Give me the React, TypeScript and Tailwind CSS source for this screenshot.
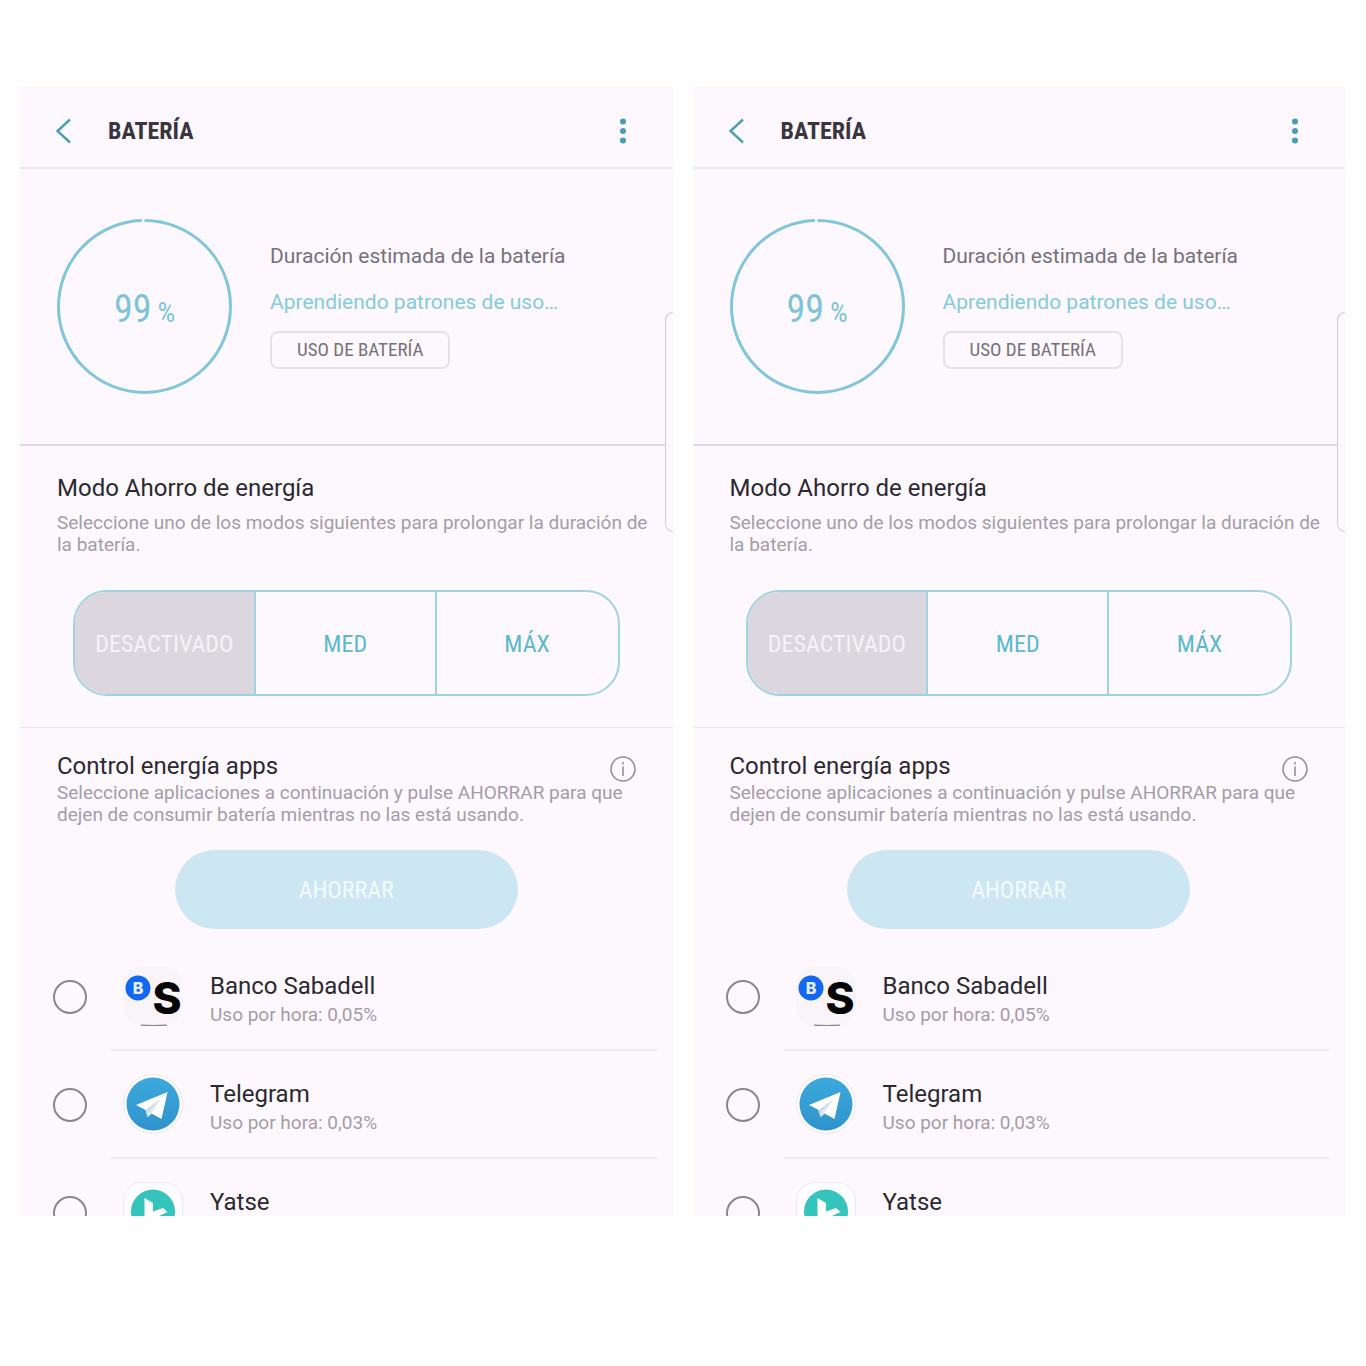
import { useState } from 'react'

interface PowerApp {
  id: string
  name: string
  usage?: string
  icon: () => React.ReactElement
}

const SabadellIcon = () => (
  <svg viewBox="0 0 60 60" className="size-15 shrink-0" aria-hidden="true">
    <rect x="0" y="0" width="60" height="60" rx="20" fill="#f8f4f8" />
    <path d="M18 59.200Q30 60 44 59.200" fill="none" stroke="#8d888e" strokeWidth="1.200" />
    <circle cx="15" cy="22" r="12.500" fill="#1268f0" />
    <text x="15" y="28" textAnchor="middle" fontSize="16" fontWeight="800" fill="#e4f0ff" className="font-['Inter',sans-serif]">
      B
    </text>
    <text x="44" y="48" textAnchor="middle" fontSize="44" fontWeight="800" fill="#050505" className="font-['Inter',sans-serif]">
      S
    </text>
  </svg>
)

const TelegramIcon = () => (
  <svg viewBox="0 0 60 60" className="size-15 shrink-0" aria-hidden="true">
    <defs>
      <linearGradient id="telegram-blue" x1="0" y1="0" x2="0" y2="1">
        <stop offset="0" stopColor="#3da9dc" />
        <stop offset="1" stopColor="#2e93cd" />
      </linearGradient>
    </defs>
    <circle cx="30" cy="30" r="29.500" fill="#fdfcfe" stroke="#ece9ee" />
    <circle cx="30" cy="30" r="26.500" fill="url(#telegram-blue)" />
    <path d="M13 31 44.500 18 38.500 45 28.500 39.500 24.500 43 22.500 36Z" fill="#fff" />
    <path d="M22.500 36 38 24.500 27 37 24.500 43Z" fill="#d3dbe8" />
    <path d="M27 37 38 24.500 28.500 39.500 24.500 43Z" fill="#e6ebf3" />
  </svg>
)

const YatseIcon = () => (
  <svg viewBox="0 0 60 60" className="size-15 shrink-0" aria-hidden="true">
    <rect x="0.500" y="0.500" width="59" height="59" rx="18" fill="#fdfcfe" stroke="#ece9ee" />
    <circle cx="30" cy="29.500" r="22" fill="#35c4bc" />
    <path d="M21.500 16 30 21V29.500L40 26 44.500 30 36 34 41 44H31L21.500 38Z" fill="#fff" />
  </svg>
)

const APPS: PowerApp[] = [
  { id: 'sabadell', name: 'Banco Sabadell', usage: '0,05%', icon: SabadellIcon },
  { id: 'telegram', name: 'Telegram', usage: '0,03%', icon: TelegramIcon },
  { id: 'yatse', name: 'Yatse', icon: YatseIcon },
]

const MODES = ['DESACTIVADO', 'MED', 'MÁX']

const BatteryScreen = () => {
  const [mode, setMode] = useState('DESACTIVADO')
  const [selected, setSelected] = useState<string[]>([])

  const toggleApp = (id: string) => {
    setSelected(
      selected.includes(id) ? selected.filter((s) => s !== id) : [...selected, id]
    )
  }

  return (
    <section className="relative min-w-0 flex-1 overflow-hidden bg-[#fcf8fe]">
      <header className="flex h-[83px] items-center border-b-2 border-[#ece5ef] px-8 pt-2">
        <button type="button" aria-label="Atrás" className="mr-8 flex w-6 justify-center">
          <svg viewBox="0 0 16 26" className="h-[26px] w-4" fill="none" stroke="#4a9fb4" strokeWidth="2.400">
            <path d="M14 1.500 1.500 13 14 24.500" />
          </svg>
        </button>
        <h1 className="flex-1 font-['Roboto_Condensed','Roboto',sans-serif] text-2xl font-bold text-[#3a353d]">
          BATERÍA
        </h1>
        <button type="button" aria-label="Más opciones" className="flex w-9 justify-center">
          <svg viewBox="0 0 8 28" className="h-7 w-2" fill="#4b9ab5">
            <circle cx="4" cy="4.500" r="3" />
            <circle cx="4" cy="14" r="3" />
            <circle cx="4" cy="23.500" r="3" />
          </svg>
        </button>
      </header>

      <div className="flex h-[277px] items-center gap-[38px] border-b-2 border-[#dfd8e2] pl-[37px]">
        <div className="relative flex size-[175px] shrink-0 items-center justify-center pt-1">
          <svg viewBox="0 0 175 175" className="absolute inset-0" fill="none" aria-hidden="true">
            <circle
              cx="87.500"
              cy="87.500"
              r="86"
              stroke="#82c6da"
              strokeWidth="3"
              pathLength="100"
              strokeDasharray="99.500 0.500"
              transform="rotate(-90 87.500 87.500)"
            />
          </svg>
          <p className="flex items-baseline gap-1.5 font-['Roboto_Condensed','Roboto',sans-serif] text-[38px] leading-none text-[#7cc5d8]">
            99<span className="text-[28px]">%</span>
          </p>
        </div>
        <div className="flex flex-col items-start pb-1">
          <p className="text-[21px] leading-[30px] text-[#77717a]">Duración estimada de la batería</p>
          <p className="mt-4 text-[21px] leading-[30px] text-[#86cbdc]">Aprendiendo patrones de uso…</p>
          <button
            type="button"
            className="mt-3.5 h-[38px] rounded-lg border-2 border-[#e6e0e9] px-[25px] font-['Roboto_Condensed','Roboto',sans-serif] text-[19px] leading-none text-[#77717a]"
          >
            USO DE BATERÍA
          </button>
        </div>
      </div>

      <div className="border-b border-[#e9e3ec] pt-[26px] pr-4 pb-[31px] pl-[37px]">
        <h2 className="text-2xl">Modo Ahorro de energía</h2>
        <p className="mt-2 text-[19px] leading-[22px] text-[#a49da6]">
          Seleccione uno de los modos siguientes para prolongar la duración de la batería.
        </p>
        <div className="mt-[34px] mr-[37px] ml-4 grid h-[106px] grid-cols-3 divide-x-2 divide-[#9fd3e2] overflow-hidden rounded-[34px] border-2 border-[#9fd3e2]">
          {MODES.map((m) => (
            <button
              key={m}
              type="button"
              aria-pressed={mode === m}
              onClick={() => setMode(m)}
              className={`pt-0.5 font-['Roboto_Condensed','Roboto',sans-serif] text-2xl ${
                mode === m ? 'bg-[#dcd7de] text-[#f6f2f8]' : 'text-[#5cb9ce]'
              }`}
            >
              {m}
            </button>
          ))}
        </div>
      </div>

      <div className="px-[37px] pt-[22px]">
        <div className="flex items-end justify-between">
          <h2 className="text-2xl">Control energía apps</h2>
          <button type="button" aria-label="Información">
            <svg viewBox="0 0 26 26" className="size-[26px]" fill="none" stroke="#958f98" strokeWidth="1.600">
              <circle cx="13" cy="13" r="12" />
              <path d="M13 10.500V20M13 6V8.500" />
            </svg>
          </button>
        </div>
        <p className="text-[19px] leading-[22px] text-[#a49da6]">
          Seleccione aplicaciones a continuación y pulse AHORRAR para que dejen de consumir
          batería mientras no las está usando.
        </p>
        <div className="mt-6 flex justify-center">
          <button
            type="button"
            className="h-[79px] w-[343px] rounded-full bg-[#cce6f2] font-['Roboto_Condensed','Roboto',sans-serif] text-2xl text-[#f3f9fd]"
          >
            AHORRAR
          </button>
        </div>
      </div>

      <ul className="mt-[14px] max-h-[273px] overflow-hidden">
        {APPS.map(({ id, name, usage, icon: Icon }) => (
          <li key={id}>
            <label className="flex h-[108px] items-center gap-6 pr-4 pl-[33px]">
              <input
                type="checkbox"
                checked={selected.includes(id)}
                onChange={() => toggleApp(id)}
                className="size-[34px] shrink-0 appearance-none rounded-full border-2 border-[#8b868e] checked:bg-[#82c6da]"
              />
              <span className="flex h-full flex-1 items-center gap-[27px] border-b-2 border-[#f0eaf2] pl-3">
                <Icon />
                <span className="flex h-[52px] flex-col">
                  <span className="text-2xl">{name}</span>
                  {usage && (
                    <span className="text-[19px] leading-[26px] text-[#a49da6]">
                      Uso por hora: {usage}
                    </span>
                  )}
                </span>
              </span>
            </label>
          </li>
        ))}
      </ul>

      {/* edge panel handle */}
      <div className="absolute top-[226px] right-0 h-[220px] w-2 rounded-l-lg border-y border-l border-[#d2ccd5] bg-[#fcf8fe]" />
    </section>
  )
}

const App = () => {
  return (
    <main className="flex min-h-screen items-start gap-5 bg-[#fefefe] pt-[86px] pr-[21px] pb-[150px] pl-5 font-['Roboto',sans-serif] text-[#2d2930]">
      <BatteryScreen />
      <BatteryScreen />
    </main>
  )
}

export default App
